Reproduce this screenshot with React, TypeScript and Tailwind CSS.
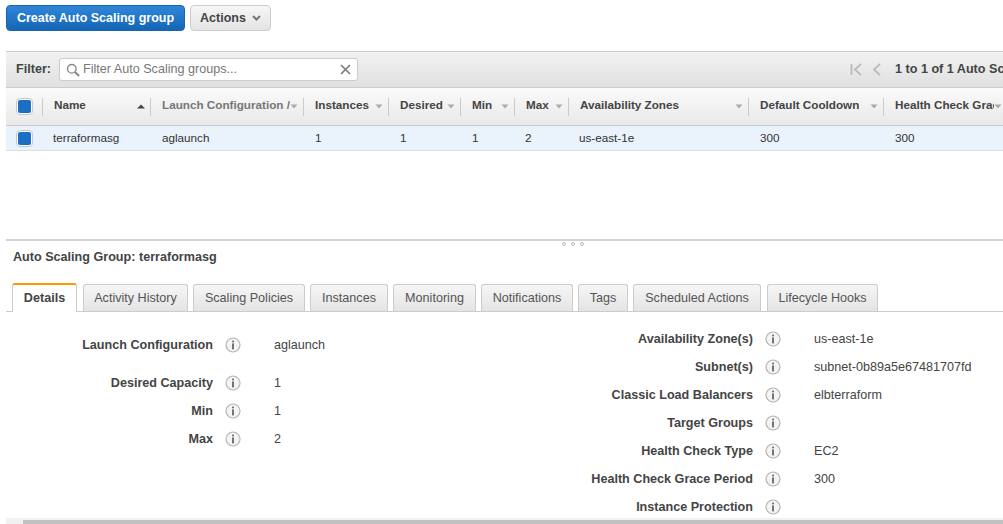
const columns = [
  { label: "Name", width: "w-[108px]", muted: false, arrow: "up" },
  { label: "Launch Configuration /", width: "w-[153px]", muted: true, arrow: "down" },
  { label: "Instances", width: "w-[85px]", muted: false, arrow: "down" },
  { label: "Desired", width: "w-[72px]", muted: false, arrow: "down" },
  { label: "Min", width: "w-[54px]", muted: false, arrow: "down" },
  { label: "Max", width: "w-[54px]", muted: false, arrow: "down" },
  { label: "Availability Zones", width: "w-[180px]", muted: false, arrow: "down" },
  { label: "Default Cooldown", width: "w-[135px]", muted: false, arrow: "down" },
  { label: "Health Check Grace Period", width: "w-[124px]", muted: false, arrow: "down" },
];

const cells = [
  { text: "terraformasg", width: "w-[109px]", pad: "pl-[10px]" },
  { text: "aglaunch", width: "w-[153px]", pad: "pl-[10px]" },
  { text: "1", width: "w-[85px]", pad: "pl-[10px]" },
  { text: "1", width: "w-[72px]", pad: "pl-[10px]" },
  { text: "1", width: "w-[53px]", pad: "pl-[10px]" },
  { text: "2", width: "w-[54px]", pad: "pl-[10px]" },
  { text: "us-east-1e", width: "w-[180px]", pad: "pl-[10px]" },
  { text: "300", width: "w-[135px]", pad: "pl-[11px]" },
  { text: "300", width: "w-[119px]", pad: "pl-[11px]" },
];

const tabs = [
  { label: "Activity History", width: "w-[105px]", gap: "" },
  { label: "Scaling Policies", width: "w-[112px]", gap: "" },
  { label: "Instances", width: "w-[78px]", gap: "" },
  { label: "Monitoring", width: "w-[83px]", gap: "" },
  { label: "Notifications", width: "w-[92px]", gap: "" },
  { label: "Tags", width: "w-[50px]", gap: "" },
  { label: "Scheduled Actions", width: "w-[128px]", gap: "" },
  { label: "Lifecycle Hooks", width: "w-[111px]", gap: "ml-px" },
];

const rightRows = [
  { label: "Availability Zone(s)", value: "us-east-1e" },
  { label: "Subnet(s)", value: "subnet-0b89a5e67481707fd" },
  { label: "Classic Load Balancers", value: "elbterraform" },
  { label: "Target Groups", value: "" },
  { label: "Health Check Type", value: "EC2" },
  { label: "Health Check Grace Period", value: "300" },
  { label: "Instance Protection", value: "" },
];

function InfoIcon() {
  return (
    <svg width="16" height="16" viewBox="0 0 16 16" className="shrink-0">
      <circle cx="8" cy="8" r="7" fill="#f4f4f4" stroke="#b4b4b4" strokeWidth="1.2" />
      <rect x="7.2" y="3.6" width="1.6" height="1.7" fill="#555" />
      <rect x="7.2" y="6.4" width="1.6" height="6" fill="#555" />
    </svg>
  );
}

function Checkbox() {
  return (
    <div className="flex h-[17px] w-[17px] items-center justify-center rounded-[4px] border border-[#c8c8c8] bg-white">
      <div className="h-[13px] w-[13px] rounded-[2px] bg-[#1d6fc4]" />
    </div>
  );
}

function SortArrow({ dir }: { dir: string }) {
  return (
    <svg width="8" height="5" viewBox="0 0 8 5" className="shrink-0">
      {dir === "up" ? <path d="M0 4.5 L4 0.5 L8 4.5 Z" fill="#444" /> : <path d="M0.5 0.5 L7.5 0.5 L4 4.5 Z" fill="#aaa" />}
    </svg>
  );
}

function DetailRow({ label, value, labelWidth }: { label: string; value: string; labelWidth: string }) {
  return (
    <div className="flex h-7 items-center">
      <div className={`${labelWidth} text-right font-bold text-[#444]`}>{label}</div>
      <div className="ml-3">
        <InfoIcon />
      </div>
      <div className="ml-[33px] text-[#444]">{value}</div>
    </div>
  );
}

export default function App() {
  return (
    <div className="relative h-[524px] w-[1003px] overflow-hidden bg-white text-[12.6px] text-[#333] font-['Liberation_Sans',Arial,sans-serif]">
      <div className="flex gap-[5px] pl-[6px] pt-[5px]">
        <button className="h-[26px] w-[179px] rounded-[4px] border border-[#1b65ad] bg-linear-to-b from-[#2f87d9] to-[#1565b5] text-[12.5px] font-bold text-white">
          Create Auto Scaling group
        </button>
        <button className="flex h-[26px] w-[81px] items-center justify-center gap-[6px] rounded-[4px] border border-[#ccc] bg-linear-to-b from-[#f6f6f6] to-[#e4e4e4] text-[12.5px] font-bold text-[#444]">
          Actions
          <svg width="9" height="6" viewBox="0 0 9 6">
            <path d="M1 1 L4.5 4.5 L8 1" fill="none" stroke="#777" strokeWidth="2" />
          </svg>
        </button>
      </div>

      <div className="ml-[6px] mt-5">
        <div className="flex h-9 items-center border-t border-[#ccc] bg-linear-to-b from-[#f2f2f2] to-[#e0e0e0]">
          <span className="ml-[10px] font-bold text-[#444]">Filter:</span>
          <div className="ml-2 flex h-[23px] w-[299px] items-center rounded-[3px] border border-[#ccc] bg-white pl-[6px] pr-[6px]">
            <svg width="14" height="14" viewBox="0 0 14 14" className="shrink-0">
              <circle cx="5.8" cy="5.8" r="4.3" fill="none" stroke="#888" strokeWidth="1.4" />
              <path d="M9 9 L13 13" stroke="#888" strokeWidth="2" />
            </svg>
            <span className="ml-[3px] flex-1 text-[#777]">Filter Auto Scaling groups...</span>
            <svg width="11" height="11" viewBox="0 0 11 11">
              <path d="M1 1 L10 10 M10 1 L1 10" stroke="#777" strokeWidth="1.6" />
            </svg>
          </div>
          <div className="ml-auto flex items-center whitespace-nowrap">
            <svg width="13" height="13" viewBox="0 0 13 13">
              <path d="M1.5 1 V12 M11 1 L5 6.5 L11 12" fill="none" stroke="#bbb" strokeWidth="1.8" />
            </svg>
            <svg width="10" height="13" viewBox="0 0 10 13" className="ml-[9px]">
              <path d="M8 1 L2 6.5 L8 12" fill="none" stroke="#bbb" strokeWidth="1.8" />
            </svg>
            <div className="ml-[13px] w-[108px] overflow-hidden font-bold text-[#444]">1 to 1 of 1 Auto Scaling Groups</div>
          </div>
        </div>

        <div className="flex h-[39px] items-center border-y border-[#ccc] bg-linear-to-b from-[#fbfbfb] to-[#e8e8e8] text-[11.7px]">
          <div className="flex h-[18px] w-[37px] shrink-0 items-center border-r border-[#ccc] pl-[10px]">
            <Checkbox />
          </div>
          {columns.map((col) => (
            <div key={col.label} className={`flex h-[18px] ${col.width} shrink-0 items-center justify-between border-r border-[#ccc] pl-[11px] pr-[5px]`}>
              <span className={`mb-[3px] overflow-hidden whitespace-nowrap font-bold ${col.muted ? "text-[#777]" : "text-[#444]"}`}>{col.label}</span>
              <SortArrow dir={col.arrow} />
            </div>
          ))}
        </div>

        <div className="flex h-[25px] items-center border-b border-[#ddd] bg-[#eaf2fc] text-[11.7px] text-[#333]">
          <div className="w-[37px] shrink-0 pl-[10px]">
            <Checkbox />
          </div>
          {cells.map((cell, i) => (
            <div key={i} className={`${cell.width} shrink-0 ${cell.pad}`}>
              {cell.text}
            </div>
          ))}
        </div>
      </div>

      <div className="relative ml-[6px] mt-[88px] border-t-2 border-[#d4d4d4]">
        <div className="absolute left-[556px] top-[1px] flex gap-[5px]">
          <span className="h-[4px] w-[4px] rounded-full border border-[#bbb]" />
          <span className="h-[4px] w-[4px] rounded-full border border-[#bbb]" />
          <span className="h-[4px] w-[4px] rounded-full border border-[#bbb]" />
        </div>
        <div className="pl-[7px] pt-[9px] font-bold leading-[15px] text-[#444]">Auto Scaling Group: terraformasg</div>

        <div className="mt-[18px] flex gap-[5px] border-b border-[#ccc] pl-[6px]">
          <div className="mb-[-1px] mr-px flex h-[29px] w-[65px] items-center justify-center rounded-t-[3px] border-x border-[#ccc] border-t-2 border-t-[#f90] bg-white font-bold text-[#444]">
            Details
          </div>
          {tabs.map((tab) => (
            <div key={tab.label} className={`flex h-[27px] ${tab.width} ${tab.gap} mt-px shrink-0 items-center justify-center rounded-t-[3px] border border-b-0 border-[#ccc] bg-linear-to-b from-[#f6f6f6] to-[#e4e4e4] text-[#555]`}>
              {tab.label}
            </div>
          ))}
        </div>

        <div className="flex">
          <div className="w-[507px] shrink-0 pt-[19px]">
            <DetailRow label="Launch Configuration" value="aglaunch" labelWidth="w-[207px]" />
            <div className="mt-[10px]">
              <DetailRow label="Desired Capacity" value="1" labelWidth="w-[207px]" />
              <DetailRow label="Min" value="1" labelWidth="w-[207px]" />
              <DetailRow label="Max" value="2" labelWidth="w-[207px]" />
            </div>
          </div>
          <div className="pt-[13px]">
            {rightRows.map((row) => (
              <DetailRow key={row.label} label={row.label} value={row.value} labelWidth="w-[240px]" />
            ))}
          </div>
        </div>
      </div>

      <div className="absolute bottom-0 left-[6px] right-0 flex h-[6px] flex-col bg-[#f1f1f1] pl-[17px] pt-[2px]">
        <div className="h-full bg-[#c1c1c1]" />
      </div>
    </div>
  );
}
